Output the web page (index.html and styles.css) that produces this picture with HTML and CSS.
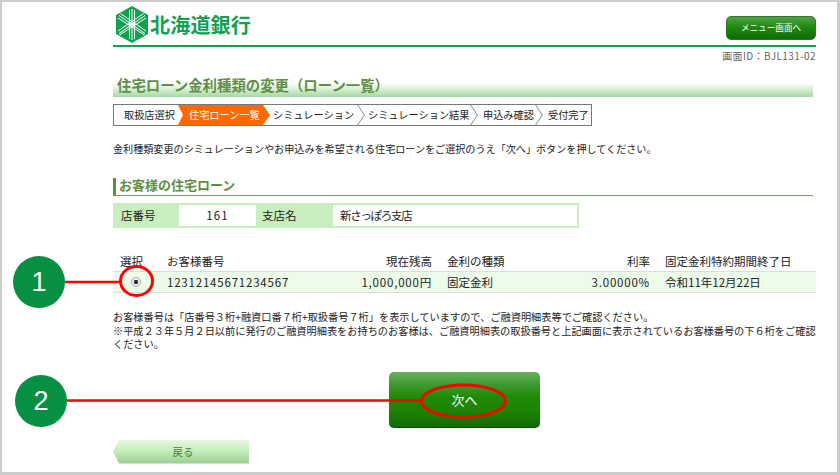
FILE: index.html
```html
<!DOCTYPE html>
<html lang="ja">
<head>
<meta charset="utf-8">
<title>住宅ローン金利種類の変更</title>
<link rel="stylesheet" href="styles.css">
</head>
<body>
<div class="frame">
  <main class="page">
    <header class="header">
      <div class="logo">
        <svg class="logo-mark" viewBox="0 0 34 37" aria-hidden="true">
          <polygon points="17,0 33,9 33,28 17,37 1,28 1,9" fill="#12a150"/>
          <g stroke="#fff" fill="none" stroke-width="1">
            <path d="M14.5 4V33M17 3V34M19.5 4V33"/>
            <path d="M4 9.5L30 27.5M3 12L29.500 29M5.500 7.500L31 25"/>
            <path d="M30 9.500L4 27.500M31 12L4.500 29M28.500 7.500L3 25"/>
          </g>
          <circle cx="17" cy="18.500" r="2" fill="#fff"/>
        </svg>
        <span class="logo-text">北海道銀行</span>
      </div>
      <a class="menu-btn">メニュー画面へ</a>
    </header>
    <div class="screen-id">画面ID：BJL131-02</div>
    <h1 class="title">住宅ローン金利種類の変更（ローン一覧）</h1>
    <ol class="steps">
      <li class="step s1">取扱店選択</li>
      <li class="step s2">住宅ローン一覧</li>
      <li class="step s3 chev">シミュレーション</li>
      <li class="step s4 chev">シミュレーション結果</li>
      <li class="step s5 chev">申込み確認</li>
      <li class="step s6">受付完了</li>
    </ol>
    <p class="lead">金利種類変更のシミュレーションやお申込みを希望される住宅ローンをご選択のうえ「次へ」ボタンを押してください。</p>
    <h2 class="section">お客様の住宅ローン</h2>
    <div class="branch">
      <div class="b-th b-w1">店番号</div>
      <div class="b-td b-w2 center">161</div>
      <div class="b-th b-w3">支店名</div>
      <div class="b-td b-w4 b-name">新さっぽろ支店</div>
    </div>
    <div class="loans">
      <div class="row head">
        <span class="c1">選択</span><span class="c2">お客様番号</span><span class="c3">現在残高</span><span class="c4">金利の種類</span><span class="c5">利率</span><span class="c6">固定金利特約期間終了日</span>
      </div>
      <div class="row data">
        <span class="c1"><span class="radio"></span></span><span class="c2 num">12312145671234567</span><span class="c3 num">1,000,000円</span><span class="c4">固定金利</span><span class="c5 num">3.00000%</span><span class="c6">令和11年12月22日</span>
      </div>
    </div>
    <div class="notes">
      <p>お客様番号は「店番号３桁+融資口番７桁+取扱番号７桁」を表示していますので、ご融資明細表等でご確認ください。</p>
      <p>※平成２３年５月２日以前に発行のご融資明細表をお持ちのお客様は、ご融資明細表の取扱番号と上記画面に表示されているお客様番号の下６桁をご確認ください。</p>
    </div>
    <div class="next-wrap"><a class="next-btn">次へ</a></div>
    <a class="back-btn">戻る</a>
  </main>
  <svg class="marks" viewBox="0 0 840 475" aria-hidden="true">
    <path d="M65 282H120M67 400.500H421" stroke="#f00" stroke-width="2.500" fill="none"/>
    <ellipse cx="136.500" cy="281" rx="16" ry="14.500" stroke="#f00" stroke-width="3" fill="none"/>
    <ellipse cx="463.500" cy="401" rx="42" ry="16" stroke="#f00" stroke-width="3" fill="none"/>
  </svg>
  <div class="badge badge-1">1</div>
  <div class="badge badge-2">2</div>
</div>
</body>
</html>
```

FILE: styles.css
```css
* { box-sizing: border-box; }
html, body { margin: 0; padding: 0; background: #fff; }
body {
  font-family: "Noto Sans CJK JP", "Noto Sans", sans-serif;
  font-size: 10.1px;
  color: #222;
  width: 840px;
  height: 475px;
  overflow: hidden;
}
.frame {
  position: relative;
  width: 840px;
  height: 475px;
  border: solid #ccc;
  border-width: 2px 3px 3px 2px;
}
.page { width: 703px; margin-left: 111px; }
p, h1, h2, ol { margin: 0; padding: 0; }

.header {
  height: 43px;
  border-bottom: 2px solid #12a150;
  display: flex;
  justify-content: space-between;
  box-sizing: content-box;
}
.logo { display: flex; align-items: flex-start; padding: 4px 0 0 2px; }
.logo-mark { width: 34px; height: 37px; display: block; }
.logo-text {
  font-size: 20px;
  line-height: 20px;
  font-weight: 700;
  color: #12a150;
  margin: 9px 0 0 1px;
  letter-spacing: 0.2px;
}
.menu-btn {
  width: 90px;
  height: 24px;
  margin-top: 14px;
  border-radius: 5px;
  background: linear-gradient(#52a04a 0, #1f8a10 45%, #126a08 100%);
  border: 1px solid #2a7a20;
  color: #fff;
  font-size: 8.6px;
  line-height: 21px;
  text-align: center;
}
.screen-id { text-align: right; color: #666; font-size: 10px; line-height: 14px; height: 14px; margin-top: 2px; letter-spacing: 0.4px; }

.title {
  width: 700px;
  margin-top: 14px;
  height: 20px;
  font-size: 14.4px;
  line-height: 16px;
  font-weight: 700;
  color: #5f8f45;
  padding-left: 4px;
  background: linear-gradient(#fff 0, #fff 30%, #a6d8a0 100%);
}
.steps {
  list-style: none;
  display: inline-flex;
  height: 22px;
  margin-top: 7px;
  border: 1px solid #777;
  vertical-align: top;
  font-size: 10.2px;
}
.step {
  position: relative;
  line-height: 20px;
  white-space: nowrap;
}
.s1 { width: 64px; padding-left: 10px; }
.s2 {
  width: 92px;
  padding-left: 11px;
  background: #ff6a00;
  color: #fff;
  clip-path: polygon(0 0, calc(100% - 7px) 0, 100% 50%, calc(100% - 7px) 100%, 0 100%, 5px 50%);
}
.s3 { width: 95px; padding-left: 3px; }
.s4 { width: 113px; padding-left: 3px; }
.s5 { width: 65px; padding-left: 5px; }
.s6 { width: 48px; padding-left: 5px; }
.chev::after {
  content: "";
  position: absolute;
  right: 0;
  top: 0;
  width: 8px;
  height: 100%;
  background: #999;
  clip-path: polygon(0 0, 1.2px 0, 8px 50%, 1.2px 100%, 0 100%, 6.8px 50%);
}
.lead { margin-top: 15px; line-height: 16px; }
.section {
  margin-top: 21px;
  width: 700px;
  height: 18px;
  border-left: 3px solid #5f8f45;
  border-bottom: 1px solid #7c9c68;
  padding-left: 3px;
  font-size: 13px;
  line-height: 13px;
  font-weight: 700;
  color: #5f8f45;
}
.branch {
  display: flex;
  width: 466px;
  height: 25px;
  margin-top: 7px;
  background: #c8eec0;
  border: 2px solid #c8eec0;
  line-height: 21px;
  font-size: 11.5px;
}
.b-th { padding-left: 6px; }
.b-td { background: #fff; padding-left: 7px; }
.b-w1 { width: 64px; }
.b-w2 { width: 77px; letter-spacing: 1.2px; }
.b-w3 { width: 77px; }
.b-w4 { width: 244px; }
.b-name { letter-spacing: -1.3px; }
.center { text-align: center; padding-left: 0; }
.loans { margin-top: 25px; }
.row { display: flex; font-size: 11.5px; }
.row.head { height: 18px; line-height: 17px; }
.row.data {
  height: 22px;
  line-height: 21px;
  background: #edfbe9;
  border: solid #ddd;
  border-width: 1px 0;
}
.num { letter-spacing: 0.8px; }
.c1 { width: 54px; padding-left: 7px; }
.c2 { width: 159px; }
.c3 { width: 106px; text-align: right; }
.c4 { width: 128px; padding-left: 15px; }
.c5 { width: 90px; text-align: right; }
.c6 { width: 166px; padding-left: 15px; }
.data .c1 { padding-left: 18px; }
.radio {
  display: inline-block;
  width: 10px;
  height: 10px;
  border-radius: 50%;
  border: 1px solid #aaa;
  background: radial-gradient(circle, #333 0, #333 2px, #eee 2.500px);
  vertical-align: middle;
  margin-top: -4px;
}
.notes { margin-top: 17px; line-height: 13.500px; width: 703px; font-size: 10.2px; }
.next-wrap { margin: 21px 0 0 276px; }
.next-btn {
  display: block;
  width: 151px;
  height: 56px;
  border-radius: 5px;
  background: linear-gradient(#68b25c 0, #3f9a32 22%, #1f8a08 45%, #1c8406 70%, #126a06 100%);
  border-bottom: 1px solid #0d4d05;
  color: #fff;
  font-size: 13px;
  line-height: 56px;
  text-align: center;
}
.back-btn {
  display: block;
  width: 136px;
  height: 24px;
  margin-top: 12px;
  background: linear-gradient(#e6f8e0 0, #c6eebc 45%, #9acc90 100%);
  clip-path: polygon(0 50%, 6px 0, 100% 0, 100% 100%, 6px 100%);
  color: #4e7f3e;
  font-size: 10.500px;
  line-height: 24px;
  text-align: center;
  padding-left: 4px;
}

.marks { position: absolute; left: -2px; top: -2px; width: 840px; height: 475px; pointer-events: none; }
.badge {
  position: absolute;
  width: 52px;
  height: 52px;
  border-radius: 50%;
  background: #078f43;
  color: #fff;
  font-family: "Liberation Sans", sans-serif;
  font-size: 27px;
  line-height: 52px;
  text-align: center;
}
.badge-1 { left: 11px; top: 254px; }
.badge-2 { left: 13px; top: 373px; }
```
